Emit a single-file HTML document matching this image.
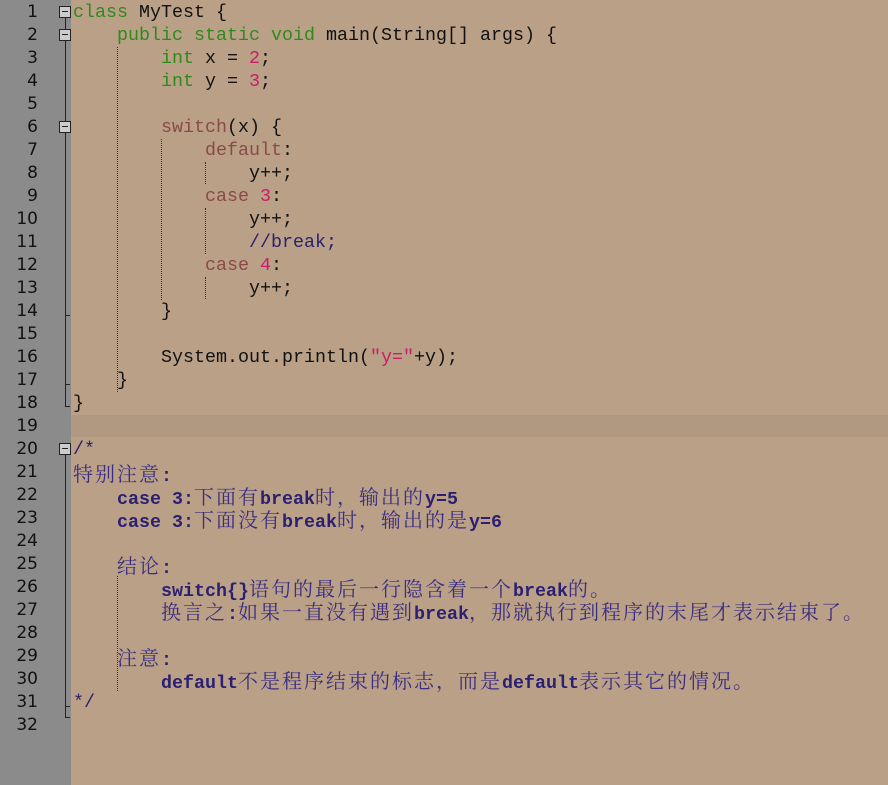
<!DOCTYPE html>
<html><head><meta charset="utf-8"><style>
body{margin:0;width:888px;height:785px;overflow:hidden;background:#b9a087;position:relative;font-family:"Liberation Mono","Noto Sans CJK SC",monospace;}
#g{position:absolute;left:0;top:0;width:71px;height:785px;background:#8b8b8b}
.n{position:absolute;left:0;width:38px;text-align:right;font:17px/23px "DejaVu Sans","Liberation Sans",sans-serif;color:#111}
.r{position:absolute;left:73px;font-size:18.33px;line-height:23px;white-space:pre;color:#111}
.k{color:#2f8a1c}.s{color:#8a4a48}.m{color:#c81e66}
.c{color:#2a1f72;font-weight:bold}
.z{font-family:"Noto Serif CJK SC","Noto Sans CJK SC",serif;font-weight:normal;color:#3b2d82;font-size:20px;letter-spacing:2px}
.hl{position:absolute;left:71px;top:415px;width:817px;height:22px;background:#b19880}
.fl{position:absolute;left:65px;width:1px;background:#222}
.bx{position:absolute;left:59px;width:10px;height:10px;border:1px solid #222;background:#ccc}
.bx:after{content:"";position:absolute;left:2px;top:4px;width:6px;height:1px;background:#222}
.tk{position:absolute;left:65px;width:5px;height:1px;background:#222}
.ig{position:absolute;width:0;border-left:1px dotted #333}
</style></head><body>
<div id="g"></div>
<div class="hl"></div>
<div class="fl" style="top:16px;height:390px"></div>
<div class="fl" style="top:452px;height:265px"></div>
<div class="bx" style="top:6px"></div>
<div class="bx" style="top:29px"></div>
<div class="bx" style="top:121px"></div>
<div class="bx" style="top:443px"></div>
<div class="tk" style="top:315px"></div>
<div class="tk" style="top:384px"></div>
<div class="tk" style="top:406px"></div>
<div class="tk" style="top:706px"></div>
<div class="tk" style="top:717px"></div>
<div class="ig" style="left:117px;top:47px;height:345px"></div>
<div class="ig" style="left:161px;top:139px;height:161px"></div>
<div class="ig" style="left:205px;top:162px;height:22px"></div>
<div class="ig" style="left:205px;top:208px;height:46px"></div>
<div class="ig" style="left:205px;top:277px;height:22px"></div>
<div class="ig" style="left:117px;top:576px;height:115px"></div>

<div class="n" style="top:1px">1</div><div class="n" style="top:24px">2</div><div class="n" style="top:47px">3</div><div class="n" style="top:70px">4</div><div class="n" style="top:93px">5</div><div class="n" style="top:116px">6</div><div class="n" style="top:139px">7</div><div class="n" style="top:162px">8</div><div class="n" style="top:185px">9</div><div class="n" style="top:208px">10</div><div class="n" style="top:231px">11</div><div class="n" style="top:254px">12</div><div class="n" style="top:277px">13</div><div class="n" style="top:300px">14</div><div class="n" style="top:323px">15</div><div class="n" style="top:346px">16</div><div class="n" style="top:369px">17</div><div class="n" style="top:392px">18</div><div class="n" style="top:415px">19</div><div class="n" style="top:438px">20</div><div class="n" style="top:461px">21</div><div class="n" style="top:484px">22</div><div class="n" style="top:507px">23</div><div class="n" style="top:530px">24</div><div class="n" style="top:553px">25</div><div class="n" style="top:576px">26</div><div class="n" style="top:599px">27</div><div class="n" style="top:622px">28</div><div class="n" style="top:645px">29</div><div class="n" style="top:668px">30</div><div class="n" style="top:691px">31</div><div class="n" style="top:714px">32</div>

<div class="r" style="top:1px"><span class="k">class</span> MyTest {</div>
<div class="r" style="top:24px">    <span class="k">public static void</span> main(String[] args) {</div>
<div class="r" style="top:47px">        <span class="k">int</span> x = <span class="m">2</span>;</div>
<div class="r" style="top:70px">        <span class="k">int</span> y = <span class="m">3</span>;</div>
<div class="r" style="top:116px">        <span class="s">switch</span>(x) {</div>
<div class="r" style="top:139px">            <span class="s">default</span>:</div>
<div class="r" style="top:162px">                y++;</div>
<div class="r" style="top:185px">            <span class="s">case</span> <span class="m">3</span>:</div>
<div class="r" style="top:208px">                y++;</div>
<div class="r" style="top:231px">                <span style="color:#2a1f72">//break;</span></div>
<div class="r" style="top:254px">            <span class="s">case</span> <span class="m">4</span>:</div>
<div class="r" style="top:277px">                y++;</div>
<div class="r" style="top:300px">        }</div>
<div class="r" style="top:346px">        System.out.println(<span class="m">"y="</span>+y);</div>
<div class="r" style="top:369px">    }</div>
<div class="r" style="top:392px">}</div>
<div class="r c" style="top:438px;font-weight:normal">/*</div>
<div class="r c" style="top:461px"><span class="z">特别注意</span>:</div>
<div class="r c" style="top:484px">    case 3:<span class="z">下面有</span>break<span class="z">时，输出的</span>y=5</div>
<div class="r c" style="top:507px">    case 3:<span class="z">下面没有</span>break<span class="z">时，输出的是</span>y=6</div>
<div class="r c" style="top:553px">    <span class="z">结论</span>:</div>
<div class="r c" style="top:576px">        switch{}<span class="z">语句的最后一行隐含着一个</span>break<span class="z">的。</span></div>
<div class="r c" style="top:599px">        <span class="z">换言之</span>:<span class="z">如果一直没有遇到</span>break<span class="z">，那就执行到程序的末尾才表示结束了。</span></div>
<div class="r c" style="top:645px">    <span class="z">注意</span>:</div>
<div class="r c" style="top:668px">        default<span class="z">不是程序结束的标志，而是</span>default<span class="z">表示其它的情况。</span></div>
<div class="r c" style="top:691px;font-weight:normal">*/</div>
</body></html>
